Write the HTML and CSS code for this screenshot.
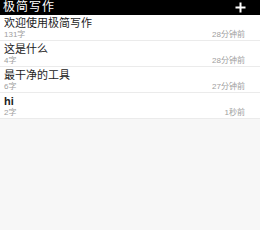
FILE: index.html
```html
<!DOCTYPE html>
<html lang="zh">
<head>
<meta charset="utf-8">
<link rel="stylesheet" href="styles.css">
</head>
<body>
<header class="bar">
  <span class="bar-title">极简写作</span>
  <svg class="add" width="11" height="11" viewBox="0 0 11 11"><path d="M5.5 0.5v10M0.5 5.5h10" stroke="#fff" stroke-width="2"/></svg>
</header>
<ul class="list">
  <li class="item"><div class="title">欢迎使用极简写作</div><div class="meta"><span>131字</span><span>28分钟前</span></div></li>
  <li class="item"><div class="title">这是什么</div><div class="meta"><span>4字</span><span>28分钟前</span></div></li>
  <li class="item"><div class="title">最干净的工具</div><div class="meta"><span>6字</span><span>27分钟前</span></div></li>
  <li class="item"><div class="title bold">hi</div><div class="meta"><span>2字</span><span>1秒前</span></div></li>
</ul>
</body>
</html>
```
FILE: styles.css
```css
html, body {
  margin: 0;
  padding: 0;
  background: #f7f7f7;
  font-family: "Liberation Sans", "Noto Sans CJK SC", sans-serif;
}
.bar {
  height: 15px;
  background: #000;
  display: flex;
  align-items: center;
  justify-content: space-between;
  padding: 0 14px 0 3px;
}
.bar-title {
  color: #fff;
  font-size: 12px;
  line-height: 15px;
  letter-spacing: 1px;
}
.add {
  display: block;
}
.list {
  list-style: none;
  margin: 0;
  padding: 0;
  background: #fff;
}
.item {
  padding: 2px 15px 0 4px;
  border-bottom: 1px solid #ebebeb;
}
.title {
  font-size: 11px;
  line-height: 13px;
  color: #222;
}
.bold {
  font-weight: bold;
}
.meta {
  display: flex;
  justify-content: space-between;
  font-size: 8px;
  line-height: 10px;
  color: #a0a0a0;
}
```
